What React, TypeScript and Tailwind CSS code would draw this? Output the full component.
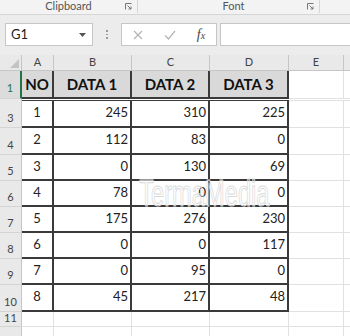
import React from 'react';

const rows: number[][] = [
  [3, 1, 245, 310, 225],
  [4, 2, 112, 83, 0],
  [5, 3, 0, 130, 69],
  [6, 4, 78, 0, 0],
  [7, 5, 175, 276, 230],
  [8, 6, 0, 0, 117],
  [9, 7, 0, 95, 0],
  [10, 8, 45, 217, 48],
];

const heights = ['h-[27px]', 'h-[27px]', 'h-[26px]', 'h-[26px]', 'h-[26px]', 'h-[26px]', 'h-[26px]', 'h-[27px]'];

const Launcher = () => (
  <svg width="7" height="7" viewBox="0 0 7 7" className="text-[#777]">
    <path d="M0.5 6.5V0.5H6.5" fill="none" stroke="currentColor" strokeWidth="1" />
    <path d="M2.5 2.5L6 6M6 3.5V6H3.5" fill="none" stroke="currentColor" strokeWidth="1" />
  </svg>
);

const Empty = ({ w, last }: { w: string; last?: boolean }) => (
  <div className={`${w} shrink-0 border-b border-[#e1e1e1] ${last ? '' : 'border-r'} bg-white`} />
);

export default function App() {
  return (
    <div className="h-[336px] w-[350px] overflow-hidden bg-white font-['Lato','Liberation_Sans',sans-serif] text-[#222]">
      {/* ribbon group labels */}
      <div className="flex h-[15px] items-start border-b border-[#d6d6d6] bg-[#f3f3f3] text-[11px] text-[#555]">
        <div className="relative flex h-[13px] w-[138px] items-center justify-center border-r border-[#d6d6d6]">
          <span className="-mt-[1px]">Clipboard</span>
          <span className="absolute right-[5px] top-[3px]">
            <Launcher />
          </span>
        </div>
        <div className="relative flex h-[13px] w-[182px] items-center justify-center border-r border-[#d6d6d6]">
          <span className="-mt-[1px] ml-[10px]">Font</span>
          <span className="absolute right-[5px] top-[3px]">
            <Launcher />
          </span>
        </div>
      </div>

      {/* formula bar */}
      <div className="flex h-[40px] items-start bg-[#ececec] pl-[5px] pt-[8px]">
        <div className="flex h-[23px] w-[88px] items-center justify-between border border-[#c6c6c6] bg-white pl-[5px] pr-[6px] text-[13px] text-[#222]">
          <span>G1</span>
          <svg width="7" height="4" viewBox="0 0 7 4">
            <path d="M0 0H7L3.5 4Z" fill="#555" />
          </svg>
        </div>
        <div className="flex h-[23px] w-[28px] flex-col items-center justify-center gap-[2px]">
          <span className="h-[1.5px] w-[1.5px] bg-[#999]" />
          <span className="h-[1.5px] w-[1.5px] bg-[#999]" />
          <span className="h-[1.5px] w-[1.5px] bg-[#999]" />
        </div>
        <div className="flex h-[23px] w-[96px] items-center border border-[#c6c6c6] bg-white">
          <div className="flex w-[32px] justify-center">
            <svg width="10" height="10" viewBox="0 0 10 10">
              <path d="M1 1L9 9M9 1L1 9" stroke="#b4b4b4" strokeWidth="1.2" />
            </svg>
          </div>
          <div className="flex w-[32px] justify-center">
            <svg width="12" height="10" viewBox="0 0 12 10">
              <path d="M1 5.5L4.5 9L11 1" fill="none" stroke="#b4b4b4" strokeWidth="1.2" />
            </svg>
          </div>
          <div className="flex w-[30px] items-baseline justify-center font-['Liberation_Serif',serif] italic leading-none text-[#444]">
            <span className="text-[14px]">f</span>
            <span className="text-[10px]">x</span>
          </div>
        </div>
        <div className="ml-[3px] h-[23px] flex-1 border border-r-0 border-[#c6c6c6] bg-white" />
      </div>

      {/* sheet */}
      <div className="relative">
        {/* column headers */}
        <div className="flex h-[16px] bg-[#e9e9e9] text-[11px] text-[#444]">
          <div className="relative w-[22px] shrink-0 border-b border-r border-[#c6c6c6]">
            <svg width="9" height="9" viewBox="0 0 9 9" className="absolute bottom-[2px] right-[2px]">
              <path d="M9 0V9H0Z" fill="#c3c3c3" />
            </svg>
          </div>
          {[
            ['A', 'w-[32px]'],
            ['B', 'w-[78px]'],
            ['C', 'w-[78px]'],
            ['D', 'w-[79px]'],
            ['E', 'w-[55px]'],
          ].map(([l, w]) => (
            <div key={l} className={`${w} flex shrink-0 items-center justify-center border-b border-r border-[#c6c6c6]`}>
              {l}
            </div>
          ))}
          <div className="flex-1 border-b border-[#c6c6c6]" />
        </div>

        {/* row 1 */}
        <div className="flex h-[28px]">
          <div className="flex w-[22px] shrink-0 items-end justify-center border-b border-r-2 border-b-[#d4d4d4] border-r-[#217346] bg-[#dcdcdc] pb-[2px] text-[11px] text-[#217346]">
            1
          </div>
          {[
            ['NO', 'w-[32px]'],
            ['DATA 1', 'w-[78px]'],
            ['DATA 2', 'w-[78px]'],
            ['DATA 3', 'w-[79px]'],
          ].map(([t, w]) => (
            <div
              key={t}
              className={`${w} flex shrink-0 items-center justify-center border-b-2 border-r-2 border-[#3a3a3a] bg-[#d9d9d9] text-[15px] font-bold text-[#111]`}
            >
              {t}
            </div>
          ))}
          <Empty w="w-[55px]" />
          <div className="flex-1 border-b border-[#e1e1e1]" />
        </div>

        {/* hidden row 2 */}
        <div className="flex h-[2px]">
          <div className="w-[22px] shrink-0 border-r border-[#c6c6c6] bg-[#e9e9e9]" />
          <div className="w-[267px] shrink-0 border-b border-[#3a3a3a] bg-white" />
          <div className="flex-1 border-b border-[#e1e1e1]" />
        </div>

        {rows.map((r, i) => (
          <div key={r[0]} className={`flex ${heights[i]} text-[13px]`}>
            <div className="flex w-[22px] shrink-0 items-end justify-center border-b border-r border-b-[#d4d4d4] border-r-[#c6c6c6] bg-[#e9e9e9] pb-[1px] text-[11px] text-[#444]">
              {r[0]}
            </div>
            <div className="flex w-[32px] shrink-0 items-center justify-center border-b-2 border-r-2 border-[#3a3a3a] pb-[1px]">
              {r[1]}
            </div>
            {[
              [r[2], 'w-[78px]'],
              [r[3], 'w-[78px]'],
              [r[4], 'w-[79px]'],
            ].map(([v, w], j) => (
              <div
                key={j}
                className={`${w} flex shrink-0 items-center justify-end border-b-2 border-r-2 border-[#3a3a3a] pb-[1px] pr-[2px]`}
              >
                {v}
              </div>
            ))}
            <Empty w="w-[55px]" />
            <div className="flex-1 border-b border-[#e1e1e1]" />
          </div>
        ))}

        <div className="flex h-[15px]">
          <div className="flex w-[22px] shrink-0 items-end justify-center border-b border-r border-b-[#d4d4d4] border-r-[#c6c6c6] bg-[#e9e9e9] text-[11px] text-[#444]">
            11
          </div>
          <Empty w="w-[32px]" />
          <Empty w="w-[78px]" />
          <Empty w="w-[78px]" />
          <Empty w="w-[79px]" />
          <Empty w="w-[55px]" />
          <div className="flex-1 border-b border-[#e1e1e1]" />
        </div>
        <div className="flex h-[15px]">
          <div className="w-[22px] shrink-0 border-r border-[#c6c6c6] bg-[#e9e9e9]" />
          <Empty w="w-[32px]" />
          <Empty w="w-[78px]" />
          <Empty w="w-[78px]" />
          <Empty w="w-[79px]" />
          <Empty w="w-[55px]" />
          <div className="flex-1 border-b border-[#e1e1e1]" />
        </div>

        {/* watermark */}
        <div className="pointer-events-none absolute left-[105px] top-[120px] w-[190px] origin-center scale-x-[0.64] text-center font-['Liberation_Sans',sans-serif] text-[37px] leading-none text-white/30 [-webkit-text-stroke:1px_#dadada]">
          TermaMedia
        </div>
      </div>
    </div>
  );
}
